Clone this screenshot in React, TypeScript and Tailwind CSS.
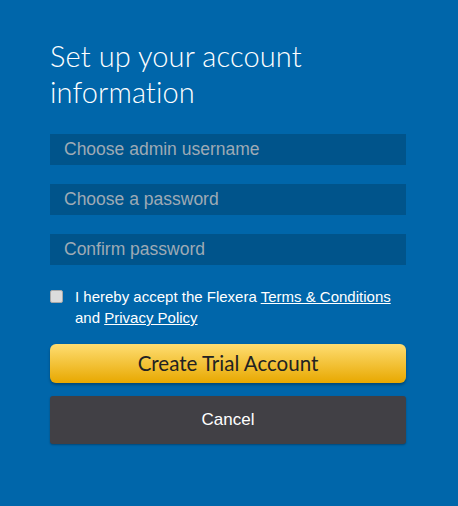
import React from "react"

const arial = { fontFamily: '"Liberation Sans", Arial, sans-serif' }
const lato = { fontFamily: 'Lato, "Open Sans", sans-serif' }

function Field({ placeholder, type = "text", autoFocus = false }: { placeholder: string; type?: string; autoFocus?: boolean }) {
  return (
    <input
      type={type}
      placeholder={placeholder}
      autoFocus={autoFocus}
      style={arial}
      className="block w-full h-[31px] bg-[#00548b] px-[14px] text-[17.5px] text-white placeholder:text-[#9eaab5] outline-none caret-white"
    />
  )
}

export default function App() {
  return (
    <div className="w-[458px] h-[506px] bg-[#0066aa] pl-[50px] pt-[38px]">
      <div className="w-[356px]">
        <h1 style={lato} className="text-[29px] leading-[36px] font-light text-white tracking-[0.1px]">
          Set up your account
          <br />
          information
        </h1>

        <div className="mt-[24px] flex flex-col gap-[19px]">
          <Field placeholder="Choose admin username" autoFocus />
          <Field placeholder="Choose a password" type="password" />
          <Field placeholder="Confirm password" type="password" />
        </div>

        <label style={arial} className="mt-[21px] flex gap-[12px] text-[15px] leading-[21px] text-white">
          <span className="mt-[4px] w-[13px] h-[13px] shrink-0 rounded-[2px] bg-[#dcdcdc] border border-[#a9a9a9]" />
          <span>
            I hereby accept the Flexera <a className="underline">Terms &amp; Conditions</a>
            <br />
            and <a className="underline">Privacy Policy</a>
          </span>
        </label>

        <button
          style={lato}
          className="mt-[16px] block w-full h-[39px] rounded-[6px] bg-[linear-gradient(to_bottom,#fedd72,#e8a800)] text-[20.5px] text-[#222] shadow-[0_2px_3px_rgba(0,0,0,0.3)]"
        >
          Create Trial Account
        </button>

        <button
          style={arial}
          className="mt-[13px] block w-full h-[48px] rounded-[3px] bg-[#414045] text-[17px] text-white shadow-[0_1px_2px_rgba(0,0,0,0.3)]"
        >
          Cancel
        </button>
      </div>
    </div>
  )
}
